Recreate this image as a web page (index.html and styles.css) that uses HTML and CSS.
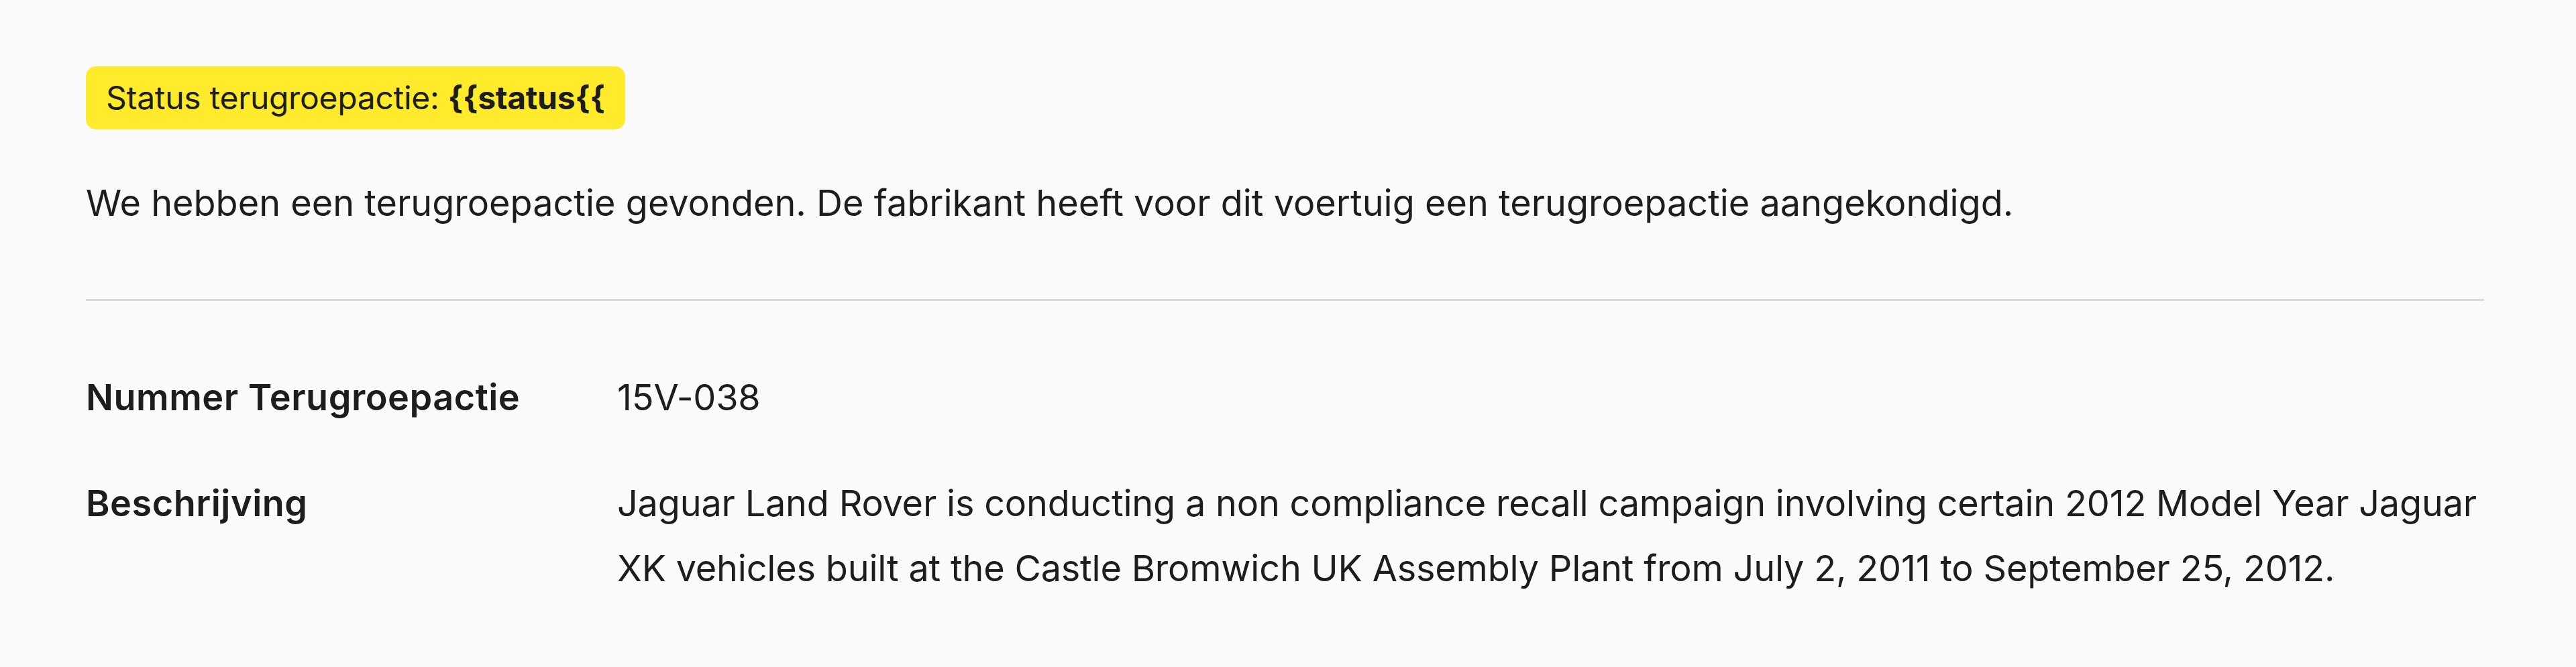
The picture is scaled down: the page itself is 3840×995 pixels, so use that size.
FILE: index.html
```html
<!DOCTYPE html>
<html lang="nl">
<head>
<meta charset="utf-8">
<title>Terugroepactie</title>
<link rel="stylesheet" href="styles.css">
</head>
<body>
<main class="recall">
  <div class="badge">Status terugroepactie: <strong>{{status{{</strong></div>
  <p class="intro">We hebben een terugroepactie gevonden. De fabrikant heeft voor dit voertuig een terugroepactie aangekondigd.</p>
  <hr class="divider">
  <dl class="details">
    <div class="row">
      <dt class="label">Nummer Terugroepactie</dt>
      <dd class="value">15V-038</dd>
    </div>
    <div class="row">
      <dt class="label">Beschrijving</dt>
      <dd class="value">Jaguar Land Rover is conducting a non compliance recall campaign involving certain 2012 Model Year Jaguar XK vehicles built at the Castle Bromwich UK Assembly Plant from July 2, 2011 to September 25, 2012.</dd>
    </div>
  </dl>
</main>
</body>
</html>
```
FILE: styles.css
```css
html, body {
  margin: 0;
  padding: 0;
  background: #fafafa;
}
body {
  font-family: Inter, "Noto Sans", sans-serif;
  color: #1d1d1d;
}
.recall {
  display: flex;
  flex-direction: column;
  align-items: flex-start;
  padding: 99px 137px 60px 128px;
}
.badge {
  background: #ffea2c;
  border-radius: 15px;
  padding: 11px 30px;
  font-size: 48px;
  line-height: 72px;
  letter-spacing: -0.3px;
}
.badge strong {
  font-weight: 700;
}
.intro {
  margin: 61px 0 0;
  font-size: 54px;
  line-height: 97px;
  letter-spacing: 0;
}
.divider {
  align-self: stretch;
  margin: 95px 0 0;
  border: 0;
  height: 3px;
  background: #d9d9d9;
}
.details {
  align-self: stretch;
  margin: 95px 0 0;
  display: flex;
  flex-direction: column;
  gap: 61px;
}
.row {
  display: grid;
  grid-template-columns: 792px 1fr;
}
.label {
  font-weight: 600;
  font-size: 54px;
  line-height: 97px;
  letter-spacing: 0.5px;
}
.value {
  margin: 0;
  font-size: 54px;
  line-height: 97px;
  letter-spacing: -0.2px;
}
```
